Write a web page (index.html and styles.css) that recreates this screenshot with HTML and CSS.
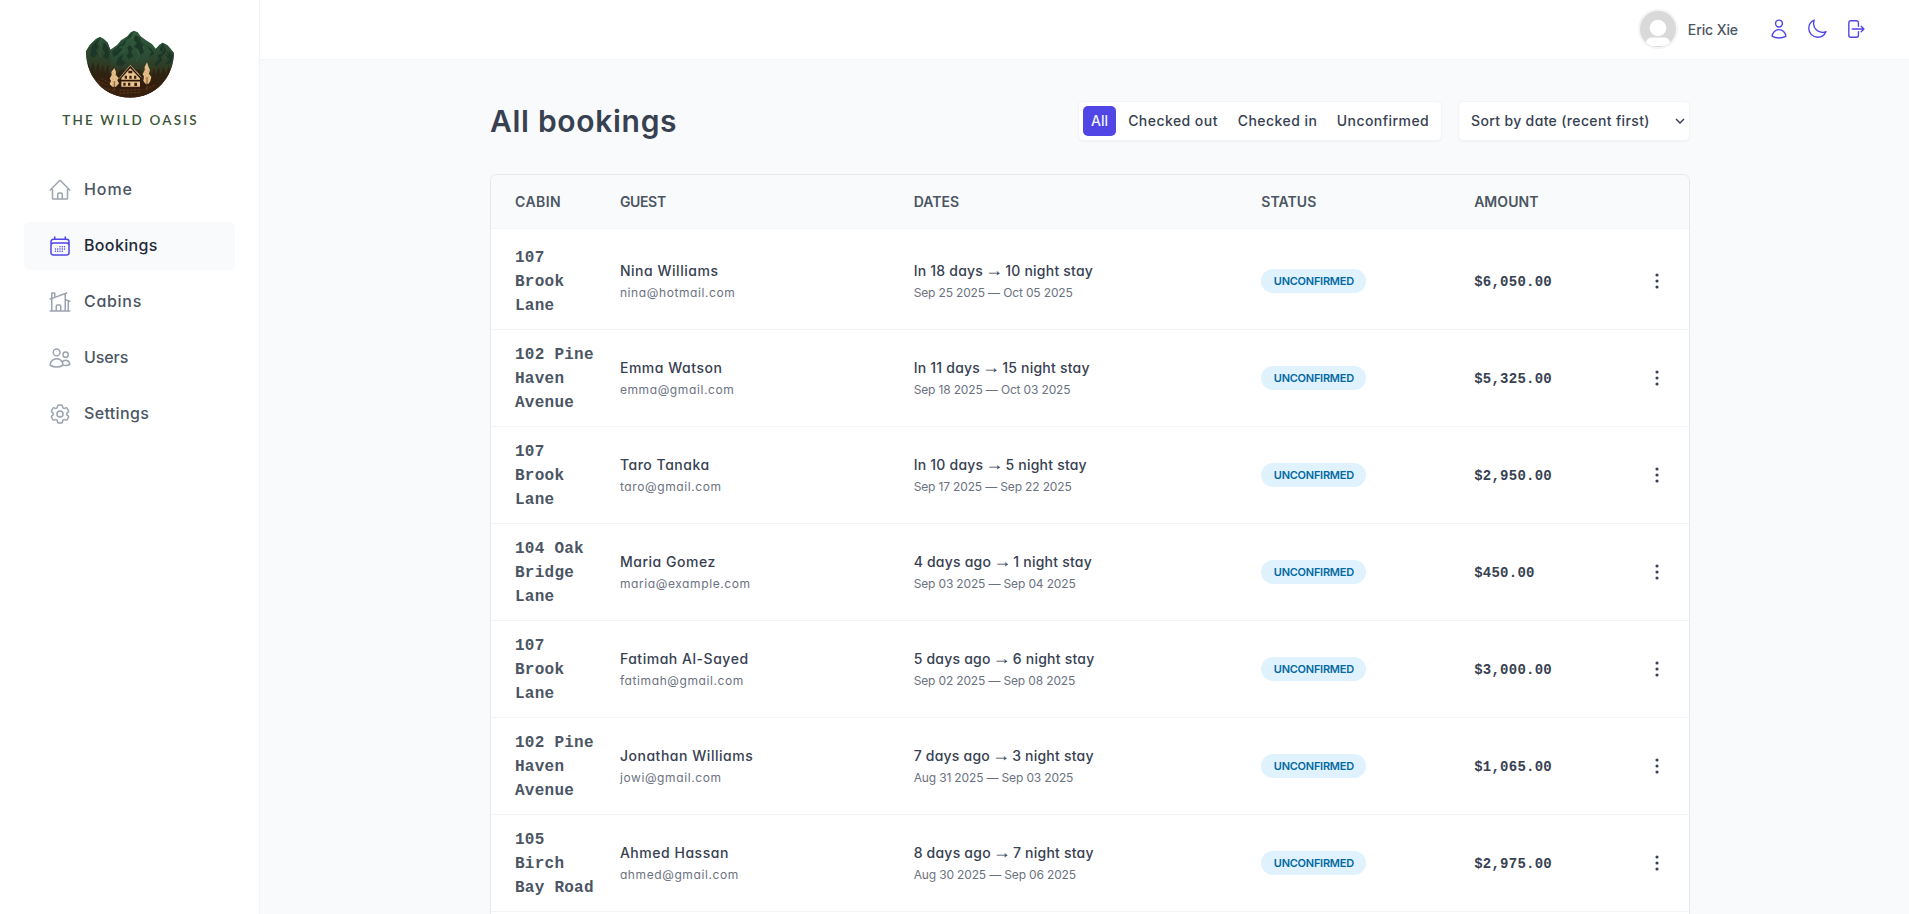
FILE: index.html
```html
<!DOCTYPE html>
<html lang="en">
<head>
<meta charset="utf-8">
<title>The Wild Oasis</title>
<link rel="stylesheet" href="styles.css">
</head>
<body>
<svg class="defs" width="0" height="0" aria-hidden="true">
  <symbol id="dots" viewBox="0 0 24 24"><circle cx="12" cy="6" r="1.55"/><circle cx="12" cy="12" r="1.55"/><circle cx="12" cy="18" r="1.55"/></symbol>
</svg>
<div class="app">
  <aside class="sidebar">
    <div class="logo">
      <svg class="logo-mark" viewBox="135 58 270 210">
        <defs>
          <linearGradient id="slope" x1="0" y1="0" x2="0" y2="1">
            <stop offset="0" stop-color="#2f5a3c"/><stop offset=".4" stop-color="#2b4d35"/><stop offset=".62" stop-color="#33331e"/><stop offset=".85" stop-color="#3a1c0c"/><stop offset="1" stop-color="#2a1208"/>
          </linearGradient>
          <linearGradient id="side" x1="0" y1="0" x2="0" y2="1">
            <stop offset="0" stop-color="#2d543b"/><stop offset=".4" stop-color="#2e3f27"/><stop offset=".75" stop-color="#43240f"/><stop offset="1" stop-color="#2a1208"/>
          </linearGradient>
          <clipPath id="bowl"><path d="M138 58H402V124C402 208 342 264 270 264S138 208 138 124Z"/></clipPath>
        </defs>
        <g clip-path="url(#bowl)">
          <path fill="url(#slope)" d="M138 268V125L150 105L168 88L180 82L191 88L203 99L211 120L232 105L243 92L262 80L272 68L282 63L293 68L302 80L318 92L336 103L347 117L358 106L368 99L382 107L389 114L402 130V268Z"/>
          <path fill="url(#side)" d="M138 125L150 105L168 88L180 82L191 88L203 99L211 120L214 150L208 190L214 268H138Z"/>
          <path fill="url(#side)" d="M300 184L318 157L336 138L347 121L358 106L368 99L382 107L402 130V268H310Z"/>
          <g fill="#1b3326" opacity=".85">
            <path d="M180 84L172 103L176 112L167 124L173 132L160 145L150 137L155 123L147 120L162 101Z"/>
            <path d="M192 98L187 117L196 130L188 142L204 150L208 132L202 110Z"/>
            <path d="M281 65L272 82L258 91L254 105L239 113L246 119L233 135L219 143L217 126L243 102L264 83Z"/>
            <path d="M286 78L280 92L291 99L283 112L296 119L302 135L312 128L307 111L315 106L304 96L300 83Z"/>
            <path d="M262 111L270 107L278 117L273 128L280 139L267 149L259 139L266 128Z"/>
            <path d="M234 145L249 134L246 151L258 158L246 170L228 165Z"/>
            <path d="M317 106L335 119L343 131L327 144L334 126Z"/>
            <path d="M368 102L359 119L365 127L352 139L358 148L342 162L350 169L367 151L363 142L379 126L374 111Z"/>
            <path d="M384 121L377 140L388 149L375 164L393 161L399 138Z"/>
          </g>
          <g fill="none" stroke="#54805b" stroke-width="1.6" opacity=".55">
            <path d="M185 88L181 103L184 116L178 130L183 142M284 69L278 84L283 96L275 106M296 81L297 93L309 103L311 118M251 96L243 110L228 124M253 120L246 131M289 121L298 136L289 153M369 109L370 123L361 134M386 122L383 137L372 148M155 110L151 121"/>
          </g>
          <path fill="#2a1b0d" opacity=".6" d="M138 190L145 160L151 181L159 155L166 184L174 157L181 187L188 163L195 190L203 164L210 196L220 170L228 205L238 180H302L309 205L329 176L335 199L342 174L348 195L356 171L362 194L370 170L378 192L386 168L392 188L402 161V220L330 240L210 240Z"/>
          <path fill="#38200f" d="M138 216L190 229L230 236H310L402 212V268H138Z"/>
          <g fill="none" stroke="#8a5728" stroke-width="1.8" stroke-dasharray="7 4" opacity=".8"><path d="M174 213L205 229M184 207L212 221M194 235L225 244M238 242L306 240M317 237L349 225M238 251L300 248"/></g>
          <path fill="#e9c38d" d="M244 235V205L249 193L272 171L296 192L300 205V235Z"/>
          <path fill="none" stroke="#2e160b" stroke-width="5" d="M240 206L271 172L302 205M241 213H302"/>
          <path fill="none" stroke="#f0cc97" stroke-width="2" d="M237 207L271 167L304 203"/>
          <path fill="#3b1d10" d="M265 183h12v8h-12zM254 198h7v9h-7zM268 198h7v9h-7zM282 198h7v9h-7zM250 219h7v9h-7zM264 219h7v9h-7zM283 219h8v10h-8zM242 231h61v5h-61z"/>
          <path fill="#e6c18a" d="M223 175L228 187L227 195L236 205L232 212L237 221L228 231H217L209 224L213 213L209 207L215 196L214 187Z"/>
          <path fill="#e6c18a" d="M321 158L326 173L330 181L327 192L334 202L331 214L326 222H316L310 213L312 200L308 194L314 182L314 171Z"/>
          <path fill="none" stroke="#b4824d" stroke-width="1.7" stroke-dasharray="4 5" d="M219 188V229M228 196V229M317 177V219M325 182V217"/>
          <path fill="none" stroke="#65401f" stroke-width="2.5" d="M223 215V242M321 202V242"/>
        </g>
      </svg>
      <span class="logo-text">THE WILD OASIS</span>
    </div>
    <nav class="nav">
      <a class="nav-item"><svg viewBox="0 0 24 24"><path d="M2.25 12l8.954-8.955c.44-.439 1.152-.439 1.591 0L21.75 12M4.5 9.75v10.125c0 .621.504 1.125 1.125 1.125H9.75v-4.875c0-.621.504-1.125 1.125-1.125h2.25c.621 0 1.125.504 1.125 1.125V21h4.125c.621 0 1.125-.504 1.125-1.125V9.75M8.25 21h8.25"/></svg><span class="home">Home</span></a>
      <a class="nav-item active"><svg viewBox="0 0 24 24"><path d="M6.75 3v2.25M17.25 3v2.25M3 18.75V7.5a2.25 2.25 0 012.25-2.25h13.5A2.25 2.25 0 0121 7.5v11.25m-18 0A2.25 2.25 0 005.25 21h13.5A2.25 2.25 0 0021 18.75m-18 0v-7.5A2.25 2.25 0 015.25 9h13.5A2.25 2.25 0 0121 11.25v7.5m-9-6h.008v.008H12v-.008zM12 15h.008v.008H12V15zm0 2.25h.008v.008H12v-.008zM9.75 15h.008v.008H9.75V15zm0 2.25h.008v.008H9.75v-.008zM7.5 15h.008v.008H7.5V15zm0 2.25h.008v.008H7.5v-.008zm6.75-4.5h.008v.008h-.008v-.008zm0 2.25h.008v.008h-.008V15zm0 2.25h.008v.008h-.008v-.008zm2.25-4.5h.008v.008H16.5v-.008zm0 2.25h.008v.008H16.5V15z"/></svg><span>Bookings</span></a>
      <a class="nav-item"><svg viewBox="0 0 24 24"><path d="M8.25 21v-4.875c0-.621.504-1.125 1.125-1.125h2.25c.621 0 1.125.504 1.125 1.125V21m0 0h4.5V3.545M12.75 21h7.5V10.75M2.25 21h1.5m18 0h-18M2.25 9l4.5-1.636M18.75 3l-1.5.545m0 6.205l3 1m1.5.5l-1.5-.5M6.75 7.364V3h-3v18m3-13.636l10.5-3.819"/></svg><span class="cabins">Cabins</span></a>
      <a class="nav-item"><svg viewBox="0 0 24 24"><path d="M15 19.128a9.38 9.38 0 002.625.372 9.337 9.337 0 004.121-.952 4.125 4.125 0 00-7.533-2.493M15 19.128v-.003c0-1.113-.285-2.16-.786-3.07M15 19.128v.106A12.318 12.318 0 018.624 21c-2.331 0-4.512-.645-6.374-1.766l-.001-.109a6.375 6.375 0 0111.964-3.07M12 6.375a3.375 3.375 0 11-6.75 0 3.375 3.375 0 016.75 0zm8.25 2.25a2.625 2.625 0 11-5.25 0 2.625 2.625 0 015.25 0z"/></svg><span class="users">Users</span></a>
      <a class="nav-item"><svg viewBox="0 0 24 24"><path d="M9.594 3.94c.09-.542.56-.94 1.11-.94h2.593c.55 0 1.02.398 1.11.94l.213 1.281c.063.374.313.686.645.87.074.04.147.083.22.127.324.196.72.257 1.075.124l1.217-.456a1.125 1.125 0 011.37.49l1.296 2.247a1.125 1.125 0 01-.26 1.431l-1.003.827c-.293.24-.438.613-.431.992a6.759 6.759 0 010 .255c-.007.378.138.75.43.99l1.005.828c.424.35.534.954.26 1.43l-1.298 2.247a1.125 1.125 0 01-1.369.491l-1.217-.456c-.355-.133-.75-.072-1.076.124a6.57 6.57 0 01-.22.128c-.331.183-.581.495-.644.869l-.213 1.28c-.09.543-.56.941-1.11.941h-2.594c-.55 0-1.02-.398-1.11-.94l-.213-1.281c-.062-.374-.312-.686-.644-.87a6.52 6.52 0 01-.22-.127c-.325-.196-.72-.257-1.076-.124l-1.217.456a1.125 1.125 0 01-1.369-.49l-1.297-2.247a1.125 1.125 0 01.26-1.431l1.004-.827c.292-.24.437-.613.43-.992a6.932 6.932 0 010-.255c.007-.378-.138-.75-.43-.99l-1.004-.828a1.125 1.125 0 01-.26-1.43l1.297-2.247a1.125 1.125 0 011.37-.491l1.216.456c.356.133.751.072 1.076-.124.072-.044.146-.087.22-.128.332-.183.582-.495.644-.869l.214-1.281z"/><path d="M15 12a3 3 0 11-6 0 3 3 0 016 0z"/></svg><span>Settings</span></a>
    </nav>
  </aside>
  <div class="page">
    <header class="topbar">
      <div class="user">
        <svg class="avatar" viewBox="0 0 40 40"><defs><clipPath id="face"><circle cx="20" cy="20" r="18"/></clipPath></defs><circle cx="20" cy="20" r="20" fill="#f3f4f6"/><g clip-path="url(#face)"><rect width="40" height="40" fill="#d9d9d9"/><circle cx="20" cy="19" r="8.300" fill="#fff"/><path fill="#fff" d="M8 36v-2c0-3.500 3-5.500 6.500-5.500h11c3.500 0 6.500 2 6.500 5.500v2l-3 1H11z"/></g></svg>
        <span>Eric Xie</span>
      </div>
      <div class="actions">
        <button class="icon-btn" aria-label="Account"><svg viewBox="0 0 24 24"><path d="M15.75 6a3.75 3.75 0 11-7.5 0 3.75 3.75 0 017.5 0zM4.501 20.118a7.5 7.5 0 0114.998 0A17.933 17.933 0 0112 21.75c-2.676 0-5.216-.584-7.499-1.632z"/></svg></button>
        <button class="icon-btn" aria-label="Dark mode"><svg viewBox="0 0 24 24"><path d="M21.752 15.002A9.718 9.718 0 0118 15.75c-5.385 0-9.75-4.365-9.75-9.75 0-1.33.266-2.597.748-3.752A9.753 9.753 0 003 11.25C3 16.635 7.365 21 12.75 21a9.753 9.753 0 009.002-5.998z"/></svg></button>
        <button class="icon-btn" aria-label="Log out"><svg viewBox="0 0 24 24"><path d="M15.75 9V5.25A2.25 2.25 0 0013.5 3h-6a2.25 2.25 0 00-2.25 2.25v13.5A2.25 2.25 0 007.5 21h6a2.25 2.25 0 002.25-2.25V15m3 0l3-3m0 0l-3-3m3 3H9"/></svg></button>
      </div>
    </header>
    <main class="main">
      <div class="heading">
        <h1>All bookings</h1>
        <div class="controls">
          <div class="filter">
            <button class="f-all selected">All</button>
            <button class="f-out">Checked out</button>
            <button class="f-in">Checked in</button>
            <button class="f-un">Unconfirmed</button>
          </div>
          <div class="sort"><span>Sort by date (recent first)</span><svg viewBox="0 0 10 10"><path d="M1 3l4 4 4-4"/></svg></div>
        </div>
      </div>
      <section class="table">
        <div class="row head"><div class="cabin-head">CABIN</div><div class="guest-head">GUEST</div><div>DATES</div><div>STATUS</div><div>AMOUNT</div><div></div></div>
        <div class="rows">
          <div class="row"><div class="cabin">107 Brook Lane</div><div class="stack guest"><span>Nina Williams</span><small>nina@hotmail.com</small></div><div class="stack dates"><span>In 18 days <i>→</i> 10 night stay</span><small>Sep 25 2025 — Oct 05 2025</small></div><span class="tag">UNCONFIRMED</span><div class="amount">$6,050.00</div><svg class="more"><use href="#dots"/></svg></div>
          <div class="row"><div class="cabin">102 Pine Haven Avenue</div><div class="stack guest"><span>Emma Watson</span><small>emma@gmail.com</small></div><div class="stack dates"><span>In 11 days <i>→</i> 15 night stay</span><small>Sep 18 2025 — Oct 03 2025</small></div><span class="tag">UNCONFIRMED</span><div class="amount">$5,325.00</div><svg class="more"><use href="#dots"/></svg></div>
          <div class="row"><div class="cabin">107 Brook Lane</div><div class="stack guest"><span>Taro Tanaka</span><small>taro@gmail.com</small></div><div class="stack dates"><span>In 10 days <i>→</i> 5 night stay</span><small>Sep 17 2025 — Sep 22 2025</small></div><span class="tag">UNCONFIRMED</span><div class="amount">$2,950.00</div><svg class="more"><use href="#dots"/></svg></div>
          <div class="row"><div class="cabin">104 Oak Bridge Lane</div><div class="stack guest"><span>Maria Gomez</span><small>maria@example.com</small></div><div class="stack dates"><span>4 days ago <i>→</i> 1 night stay</span><small>Sep 03 2025 — Sep 04 2025</small></div><span class="tag">UNCONFIRMED</span><div class="amount">$450.00</div><svg class="more"><use href="#dots"/></svg></div>
          <div class="row"><div class="cabin">107 Brook Lane</div><div class="stack guest"><span>Fatimah Al-Sayed</span><small>fatimah@gmail.com</small></div><div class="stack dates"><span>5 days ago <i>→</i> 6 night stay</span><small>Sep 02 2025 — Sep 08 2025</small></div><span class="tag">UNCONFIRMED</span><div class="amount">$3,000.00</div><svg class="more"><use href="#dots"/></svg></div>
          <div class="row"><div class="cabin">102 Pine Haven Avenue</div><div class="stack guest"><span>Jonathan Williams</span><small>jowi@gmail.com</small></div><div class="stack dates"><span>7 days ago <i>→</i> 3 night stay</span><small>Aug 31 2025 — Sep 03 2025</small></div><span class="tag">UNCONFIRMED</span><div class="amount">$1,065.00</div><svg class="more"><use href="#dots"/></svg></div>
          <div class="row"><div class="cabin">105 Birch Bay Road</div><div class="stack guest"><span>Ahmed Hassan</span><small>ahmed@gmail.com</small></div><div class="stack dates"><span>8 days ago <i>→</i> 7 night stay</span><small>Aug 30 2025 — Sep 06 2025</small></div><span class="tag">UNCONFIRMED</span><div class="amount">$2,975.00</div><svg class="more"><use href="#dots"/></svg></div>
        </div>
      </section>
    </main>
  </div>
</div>
</body>
</html>
```
FILE: styles.css
```css
*{box-sizing:border-box;margin:0;padding:0}
body{font-family:Inter,"Open Sans",sans-serif;font-feature-settings:"cv11";font-size:16px;line-height:1.5;color:#374151;background:#f9fafb;overflow:hidden}
button{font:inherit;font-feature-settings:inherit;letter-spacing:inherit;color:inherit;background:none;border:0}
.defs{display:block;width:0;height:0}
.app{display:grid;grid-template-columns:260px 1fr;height:100vh}

.sidebar{background:#fff;border-right:1px solid #f3f4f6;padding:29px 24px 0}
.logo{display:flex;flex-direction:column;align-items:center;height:137px}
.logo-mark{width:90px;height:70px}
.logo-text{font:600 13.5px/20px Lato,sans-serif;letter-spacing:2.15px;margin:11px -2px 0 0;color:#3c5438;white-space:nowrap}
.nav{display:flex;flex-direction:column;gap:8px}
.nav-item{display:flex;align-items:center;gap:12px;height:48px;padding:0 24px;border-radius:5px;font-weight:500;letter-spacing:.35px;color:#4b5563}
.nav-item svg{width:24px;height:24px;fill:none;stroke:#9ca3af;stroke-width:1.5;stroke-linecap:round;stroke-linejoin:round}
.nav-item span{padding-bottom:2px}
.nav-item.active{background:#f9fafb;color:#1f2937}
.nav-item.active svg{stroke:#4f46e5}
.nav-item .home{letter-spacing:.9px}
.nav-item .cabins{letter-spacing:.7px}
.nav-item .users{letter-spacing:-.1px}

.page{display:flex;flex-direction:column;min-width:0;height:100vh}
.topbar{display:flex;justify-content:flex-end;align-items:center;gap:24px;height:60px;flex:none;padding-right:37px;padding-bottom:1px;background:#fff;border-bottom:1px solid #f3f4f6}
.user{display:flex;align-items:center;gap:10px;font-size:14px;font-weight:500;letter-spacing:-.1px;color:#4b5563}
.avatar{width:40px;height:40px}
.actions{display:flex;gap:4px}
.icon-btn{width:34px;height:34px;padding:6px}
.icon-btn svg{display:block;width:22px;height:22px;fill:none;stroke:#4f46e5;stroke-width:1.5;stroke-linecap:round;stroke-linejoin:round}

.main{display:flex;flex-direction:column;gap:32px;flex:1;min-height:0;width:1430px;padding:40px 0 0 230px}
.heading{display:flex;justify-content:space-between;align-items:center;height:42px;flex:none}
h1{font-size:30px;font-weight:600;line-height:42px;letter-spacing:.7px;color:#374151}
.controls{display:flex;gap:16px}
.filter{display:flex;gap:4px;padding:4px;height:40px;background:#fff;border:1px solid #f3f4f6;border-radius:5px;box-shadow:0 1px 2px rgba(0,0,0,.04);font-size:14px;font-weight:500;letter-spacing:.45px}
.filter button{height:30px;padding-bottom:1px;border-radius:5px;white-space:nowrap}
.filter .selected{background:#4f46e5;color:#eef2ff}
.filter .f-all{width:33px;letter-spacing:0}
.f-out{width:106px}
.f-in{width:95px}
.f-un{width:108px}
.sort{display:flex;align-items:center;justify-content:space-between;width:232px;height:40px;padding:0 4px 0 12px;background:#fff;border:1px solid #f3f4f6;border-radius:5px;box-shadow:0 1px 2px rgba(0,0,0,.04);font-size:14px;font-weight:500;letter-spacing:.35px}
.sort span{padding-bottom:1px}
.sort svg{width:10px;height:10px;fill:none;stroke:#374151;stroke-width:1.5}

.table{flex:1;min-height:0;overflow:hidden;border:1px solid #e5e7eb;border-bottom:0;border-radius:7px 7px 0 0;background:#fff;font-size:14px}
.row{display:grid;grid-template-columns:.6fr 2fr 2.4fr 1.4fr 1fr 32px;column-gap:24px;align-items:center;padding:12px 24px;height:97px;border-bottom:1px solid #f3f4f6}
.head{height:54px;padding:0 24px;background:#f9fafb;font-weight:600;letter-spacing:.05px;color:#4b5563}
.cabin-head{letter-spacing:.45px}
.guest-head{letter-spacing:-.35px}
.rows{padding-top:4px}
.cabin{padding-top:1px;margin-bottom:-1px;font:bold 16px/24px "Liberation Mono",monospace;letter-spacing:.25px;color:#4b5563}
.stack{display:flex;flex-direction:column;gap:4px;white-space:nowrap}
.stack span{height:19px;font-weight:500;line-height:19px}
.stack small{font-size:12px;line-height:18px;color:#6b7280}
.stack i{margin:0 -2px;font:400 18px/1 "Liberation Sans",sans-serif}
.guest span{letter-spacing:.53px}
.guest small{letter-spacing:.6px}
.dates span{letter-spacing:.22px}
.dates small{letter-spacing:-.15px}
.tag{justify-self:start;width:105px;height:24px;border-radius:24px;background:#e0f2fe;color:#0369a1;font-size:11px;font-weight:600;line-height:24px;letter-spacing:-.25px;text-align:center}
.amount{padding-top:2px;font:bold 14px/21px "Liberation Mono",monospace;letter-spacing:.25px;color:#374151}
.more{justify-self:center;width:24px;height:24px;margin-left:16px;fill:#374151}
```
